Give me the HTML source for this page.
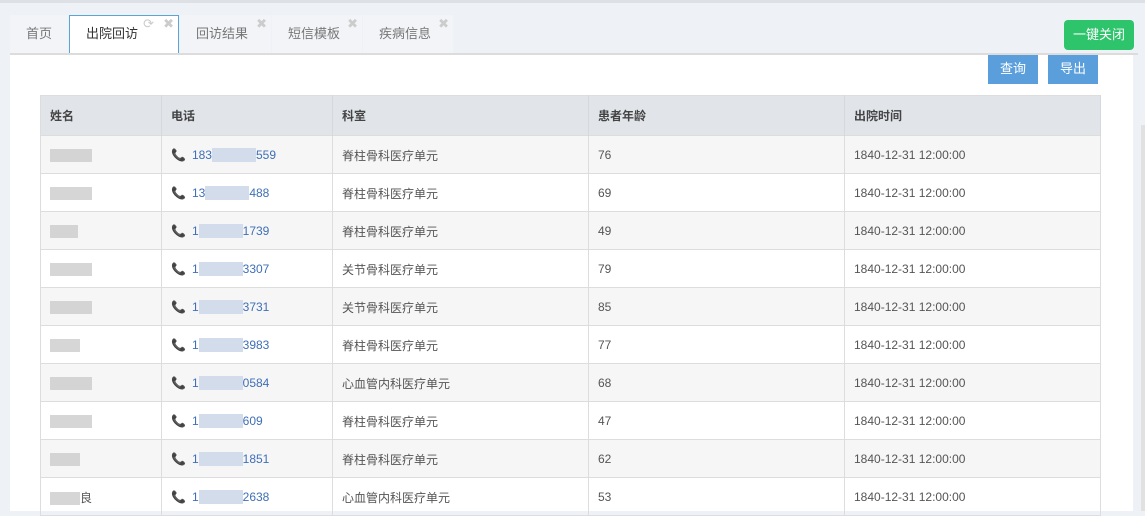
<!DOCTYPE html>
<html><head><meta charset="utf-8"><style>
*{margin:0;padding:0;box-sizing:border-box}
body{width:1145px;height:511px;overflow:hidden;background:#eef1f6;font-family:"Liberation Sans","Noto Sans CJK SC",sans-serif;font-size:12px;color:#555;position:relative}
.top{position:absolute;left:0;top:0;width:1145px;height:3px;background:#dde1e6}
.tabs{position:absolute;left:10px;top:15px;height:38px;display:flex}
.tab{height:38px;background:#f2f4f8;color:#777;font-size:13px;line-height:38px;padding:0 16px;position:relative;margin-right:1px}
.tab.act{background:#fff;border:1px solid #5aa4d8;border-bottom:none;color:#333;line-height:36px}
.x{position:absolute;top:-12px;right:4px;color:#ccc;font-size:13px;line-height:1}
.line{position:absolute;left:10px;top:53px;width:1128px;height:2px;background:#dcdcdc}
.content{position:absolute;left:10px;top:55px;width:1123px;height:456px;background:#fff}
.sb{position:absolute;left:1138px;top:55px;width:7px;height:456px;background:#eef1f6}
.sb i{position:absolute;left:3px;top:70px;width:4px;height:386px;background:#e1e1e1}
.btn{position:absolute;color:#fff;font-size:13px;text-align:center}
table{position:absolute;left:40px;top:95px;width:1061px;border-collapse:collapse;border:1px solid #ddd}
th{background:#e1e5ea;height:40px;text-align:left;padding-left:9px;font-weight:bold;color:#444;border-right:1px solid #d5d8dc}
td{height:38px;border-top:1px solid #ddd;border-right:1px solid #ddd;padding-left:9px;padding-top:1px;color:#555}
tr:nth-child(even) td{background:#f6f6f6}
.ph{color:#3f6fb6}
.ph b{color:#333;margin-right:6px;font-size:12px}
.blur{display:inline-block;width:42px;height:13px;background:#ccc;vertical-align:middle;opacity:.8}
.bl2{display:inline-block;width:44px;height:14px;background:#d3dcea;vertical-align:middle}
</style></head><body>
<div class="top"></div>
<div class="tabs">
<div class="tab" style="width:58px">首页</div>
<div class="tab act" style="width:110px">出院回访<span class="x" style="top:1px;right:24px">⟳</span><span class="x" style="top:1px">✖</span></div>
<div class="tab" style="width:91px">回访结果<span class="x" style="top:2px">✖</span></div>
<div class="tab" style="width:90px">短信模板<span class="x" style="top:2px">✖</span></div>
<div class="tab" style="width:90px">疾病信息<span class="x" style="top:2px">✖</span></div>
</div>
<div class="btn" style="left:1064px;top:20px;width:70px;height:30px;line-height:30px;background:#2ec46c;border-radius:4px">一键关闭</div>
<div class="line"></div>
<div class="content"></div>
<div class="sb"><i></i></div>
<div class="btn" style="left:988px;top:55px;width:50px;height:29px;line-height:27px;background:#5a9fdc">查询</div>
<div class="btn" style="left:1048px;top:55px;width:50px;height:29px;line-height:27px;background:#5a9fdc">导出</div>
<table>
<tr><th style="width:121px">姓名</th><th style="width:171px">电话</th><th style="width:256px">科室</th><th style="width:256px">患者年龄</th><th>出院时间</th></tr>
<tr><td><span class="blur"></span></td><td class="ph"><b>📞</b>183<span class="bl2"></span>559</td><td>脊柱骨科医疗单元</td><td>76</td><td>1840-12-31 12:00:00</td></tr>
<tr><td><span class="blur"></span></td><td class="ph"><b>📞</b>13<span class="bl2"></span>488</td><td>脊柱骨科医疗单元</td><td>69</td><td>1840-12-31 12:00:00</td></tr>
<tr><td><span class="blur" style="width:28px"></span></td><td class="ph"><b>📞</b>1<span class="bl2"></span>1739</td><td>脊柱骨科医疗单元</td><td>49</td><td>1840-12-31 12:00:00</td></tr>
<tr><td><span class="blur"></span></td><td class="ph"><b>📞</b>1<span class="bl2"></span>3307</td><td>关节骨科医疗单元</td><td>79</td><td>1840-12-31 12:00:00</td></tr>
<tr><td><span class="blur"></span></td><td class="ph"><b>📞</b>1<span class="bl2"></span>3731</td><td>关节骨科医疗单元</td><td>85</td><td>1840-12-31 12:00:00</td></tr>
<tr><td><span class="blur" style="width:30px"></span></td><td class="ph"><b>📞</b>1<span class="bl2"></span>3983</td><td>脊柱骨科医疗单元</td><td>77</td><td>1840-12-31 12:00:00</td></tr>
<tr><td><span class="blur"></span></td><td class="ph"><b>📞</b>1<span class="bl2"></span>0584</td><td>心血管内科医疗单元</td><td>68</td><td>1840-12-31 12:00:00</td></tr>
<tr><td><span class="blur"></span></td><td class="ph"><b>📞</b>1<span class="bl2"></span>609</td><td>脊柱骨科医疗单元</td><td>47</td><td>1840-12-31 12:00:00</td></tr>
<tr><td><span class="blur" style="width:30px"></span></td><td class="ph"><b>📞</b>1<span class="bl2"></span>1851</td><td>脊柱骨科医疗单元</td><td>62</td><td>1840-12-31 12:00:00</td></tr>
<tr><td><span class="blur" style="width:30px"></span>良</td><td class="ph"><b>📞</b>1<span class="bl2"></span>2638</td><td>心血管内科医疗单元</td><td>53</td><td>1840-12-31 12:00:00</td></tr>
</table>
</body></html>
